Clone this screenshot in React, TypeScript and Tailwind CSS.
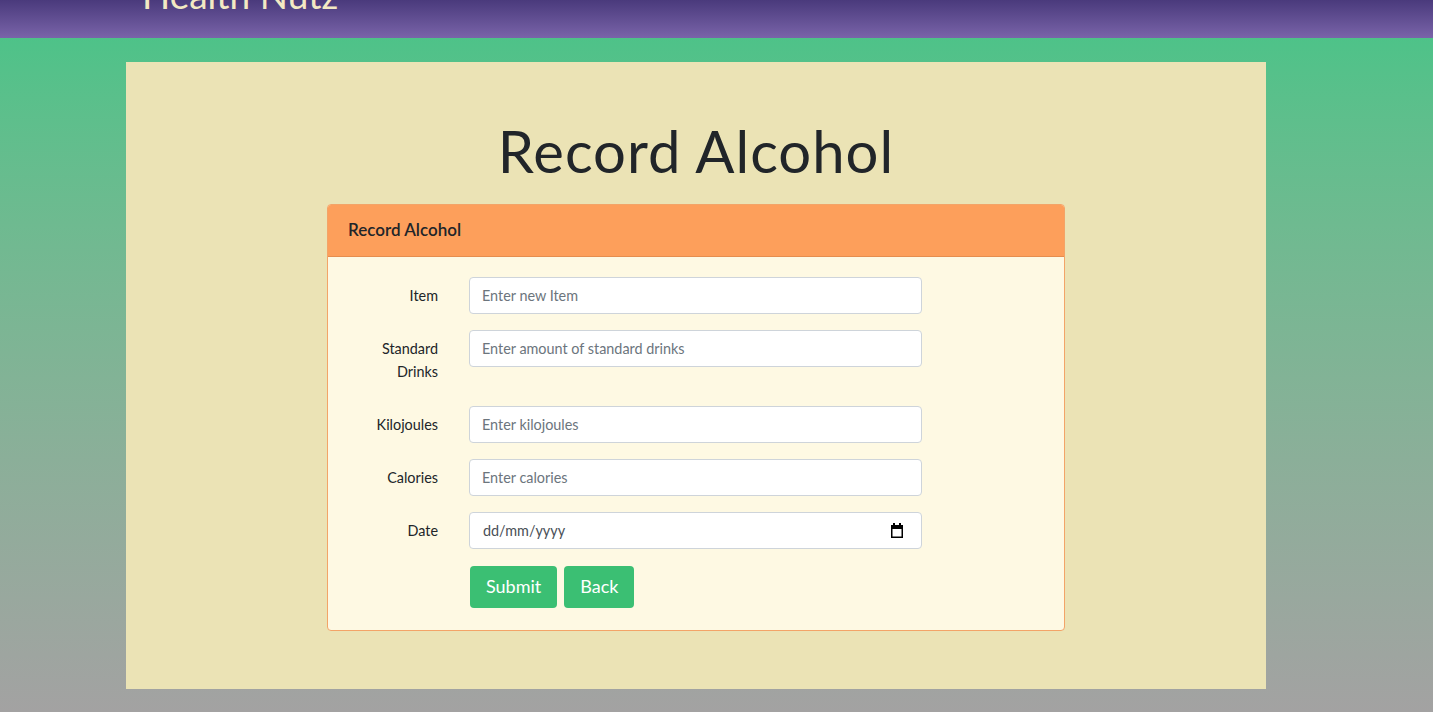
const fields = [
  { label: "Item", placeholder: "Enter new Item" },
  { label: "Standard Drinks", placeholder: "Enter amount of standard drinks" },
  { label: "Kilojoules", placeholder: "Enter kilojoules" },
  { label: "Calories", placeholder: "Enter calories" },
];

function CalendarIcon() {
  return (
    <svg width="14" height="15" viewBox="0 0 14 15" className="text-black">
      <rect x="3" y="0" width="2" height="3" fill="currentColor" />
      <rect x="9" y="0" width="2" height="3" fill="currentColor" />
      <rect x="1" y="2" width="12" height="4" fill="currentColor" />
      <rect x="1.75" y="2.75" width="10.5" height="11.5" fill="none" stroke="currentColor" strokeWidth="1.5" />
    </svg>
  );
}

export default function App() {
  return (
    <div className="flex min-h-screen flex-col bg-gradient-to-b from-[#45c487] to-[#a3a2a2] font-['Lato','Liberation_Sans',sans-serif] text-[#212529]">
      {/* Navbar */}
      <nav className="h-[38px] shrink-0 overflow-hidden bg-gradient-to-b from-[#4a3a7c] to-[#7a64a9]">
        <div className="-mt-[24px] pl-[142px] text-[37px] leading-none text-[#f3e9c3]">Health Nutz</div>
      </nav>

      <main className="pt-[24px] pb-[23px] pl-[126px]">
        <div className="flex w-[1140px] flex-col items-center bg-[#ebe3b5] pt-[54px] pb-[58px]">
          <h1 className="mb-[18px] text-[58px] leading-[1.2] font-normal tracking-[1px]">Record Alcohol</h1>

          <div className="w-[738px] overflow-hidden rounded-[4px] border border-[#f3a468] bg-[#fef9e3]">
            <div className="flex h-[52px] items-center border-b border-[#e58d4e] bg-[#fd9f5b] px-[20px] text-[17px] font-semibold">
              Record Alcohol
            </div>
            <form className="p-[20px]" onSubmit={(e) => e.preventDefault()}>
              {fields.map((f) => (
                <div key={f.label} className="mb-[16px] flex items-start">
                  <label className="w-[90px] py-[7px] pl-[20px] text-right text-[14.4px] leading-[1.6]">{f.label}</label>
                  <input
                    className="ml-[31px] h-[37px] w-[453px] rounded-[4px] border border-[#ced4da] bg-white px-[12px] text-[14.4px] text-[#495057] outline-none placeholder:text-[#6c757d]"
                    placeholder={f.placeholder}
                  />
                </div>
              ))}
              <div className="mb-[17px] flex items-start">
                <label className="w-[90px] py-[7px] text-right text-[14.4px] leading-[1.6]">Date</label>
                <div className="ml-[31px] flex h-[37px] w-[453px] items-center justify-between rounded-[4px] border border-[#ced4da] bg-white pr-[17px] pl-[13px] text-[14.4px] text-[#495057]">
                  <span>dd/mm/yyyy</span>
                  <CalendarIcon />
                </div>
              </div>
              <div className="ml-[122px] flex gap-[7px] pb-[2px]">
                <button className="h-[42px] rounded-[4px] bg-[#3bbf73] px-[16px] text-[18px] text-white">Submit</button>
                <button className="h-[42px] rounded-[4px] bg-[#3bbf73] px-[16px] text-[18px] text-white">Back</button>
              </div>
            </form>
          </div>
        </div>
      </main>
    </div>
  );
}
